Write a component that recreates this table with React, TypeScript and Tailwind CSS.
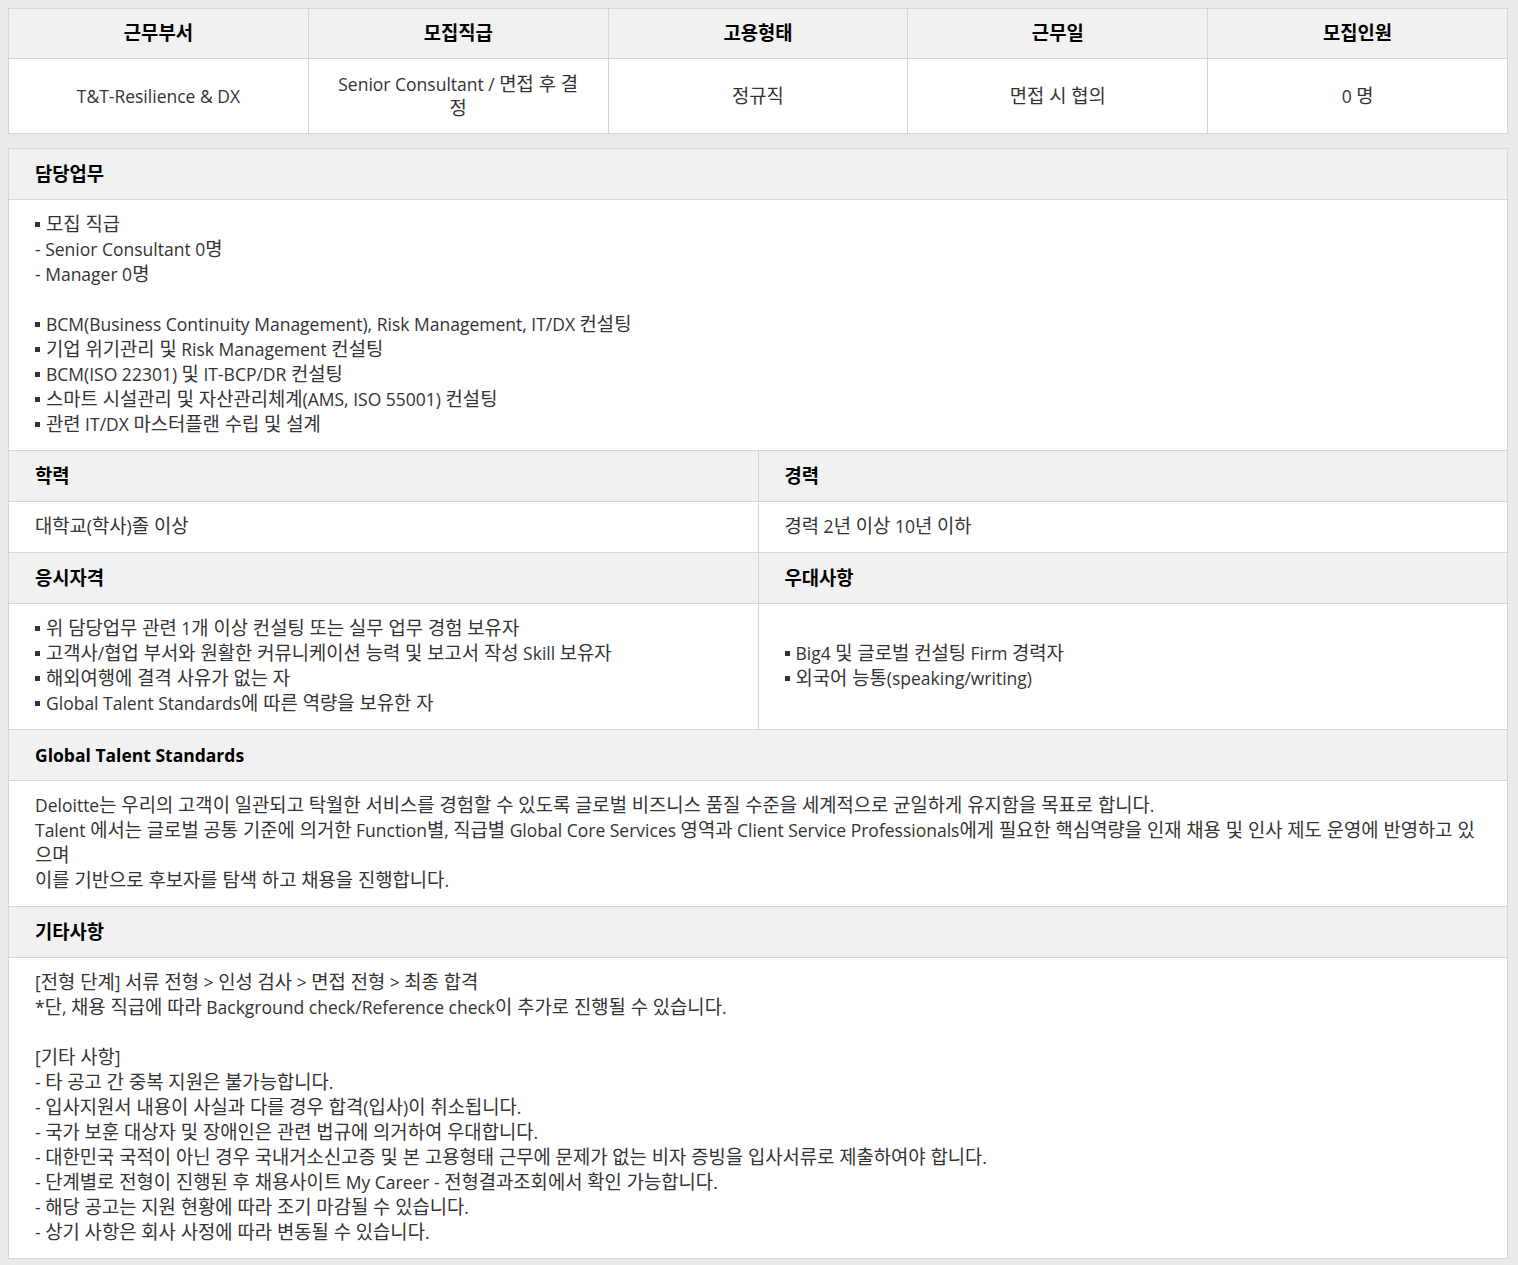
import type { ReactNode } from "react";

const font = { fontFamily: '"Open Sans", "Noto Sans CJK KR", sans-serif' };

// hangul runs are set a bit larger, the way the Korean face in the reference sits next to Open Sans
const HANGUL = /([\u3131-\u318E\uAC00-\uD7A3](?:[\u3131-\u318E\uAC00-\uD7A3 ]*[\u3131-\u318E\uAC00-\uD7A3])?)/;

function K({ t }: { t: string }) {
  const parts = t.split(HANGUL);
  return (
    <>
      {parts.map((p, i) =>
        i % 2 ? (
          <span key={i} className="text-[18.8px] leading-none">
            {p}
          </span>
        ) : (
          p
        )
      )}
    </>
  );
}

const topHeads = ["근무부서", "모집직급", "고용형태", "근무일", "모집인원"];
const topCells = ["T&T-Resilience & DX", "Senior Consultant / 면접 후 결정", "정규직", "면접 시 협의", "0 명"];

const th = "border border-[#d5d5d5] bg-[#f1f1f1] px-[26px] py-[13px] text-left text-[17.5px] font-bold leading-[24px] text-black";
const td = "border border-[#d5d5d5] bg-white px-[26px] pt-[12px] pb-[13px] align-middle text-[17.5px] leading-[25px] text-[#333]";

function Line({ t }: { t: string }) {
  let body: ReactNode = <K t={t} />;
  if (t.startsWith("▪ ")) {
    body = (
      <>
        <span className="mr-[6px] inline-block h-[5px] w-[5px] -translate-y-[4px] bg-[#333]" />
        <K t={t.slice(2)} />
      </>
    );
  }
  return <div className="min-h-[25px]">{body}</div>;
}

function Lines({ items }: { items: string[] }) {
  return (
    <>
      {items.map((t, i) => (
        <Line key={i} t={t} />
      ))}
    </>
  );
}

export default function App() {
  return (
    <div className="min-h-[1265px] bg-[#e9eaea] pl-2 pt-2 pb-[7px]" style={font}>
      <table className="w-[1500px] table-fixed border-collapse">
        <thead>
          <tr>
            {topHeads.map((h) => (
              <th key={h} className="border border-[#d5d5d5] bg-[#f1f1f1] px-5 py-[12px] text-center text-[17.5px] font-bold leading-[25px] text-black">
                <K t={h} />
              </th>
            ))}
          </tr>
        </thead>
        <tbody>
          <tr>
            {topCells.map((c) => (
              <td key={c} className="border border-[#d5d5d5] bg-white px-[26px] py-[13px] text-center text-[17.5px] leading-[24px] text-[#333]">
                <K t={c} />
              </td>
            ))}
          </tr>
        </tbody>
      </table>

      <table className="mt-[14px] w-[1500px] table-fixed border-collapse">
        <tbody>
          <tr>
            <th colSpan={2} className={th}>
              <K t="담당업무" />
            </th>
          </tr>
          <tr>
            <td colSpan={2} className={td}>
              <Lines
                items={[
                  "▪ 모집 직급",
                  "- Senior Consultant 0명",
                  "- Manager 0명",
                  "",
                  "▪ BCM(Business Continuity Management), Risk Management, IT/DX 컨설팅",
                  "▪ 기업 위기관리 및 Risk Management 컨설팅",
                  "▪ BCM(ISO 22301) 및 IT-BCP/DR 컨설팅",
                  "▪ 스마트 시설관리 및 자산관리체계(AMS, ISO 55001) 컨설팅",
                  "▪ 관련 IT/DX 마스터플랜 수립 및 설계",
                ]}
              />
            </td>
          </tr>
          <tr>
            <th className={th}>
              <K t="학력" />
            </th>
            <th className={th}>
              <K t="경력" />
            </th>
          </tr>
          <tr>
            <td className={td}>
              <K t="대학교(학사)졸 이상" />
            </td>
            <td className={td}>
              <K t="경력 2년 이상 10년 이하" />
            </td>
          </tr>
          <tr>
            <th className={th}>
              <K t="응시자격" />
            </th>
            <th className={th}>
              <K t="우대사항" />
            </th>
          </tr>
          <tr>
            <td className={td}>
              <Lines
                items={[
                  "▪ 위 담당업무 관련 1개 이상 컨설팅 또는 실무 업무 경험 보유자",
                  "▪ 고객사/협업 부서와 원활한 커뮤니케이션 능력 및 보고서 작성 Skill 보유자",
                  "▪ 해외여행에 결격 사유가 없는 자",
                  "▪ Global Talent Standards에 따른 역량을 보유한 자",
                ]}
              />
            </td>
            <td className={td}>
              <Lines items={["▪ Big4 및 글로벌 컨설팅 Firm 경력자", "▪ 외국어 능통(speaking/writing)"]} />
            </td>
          </tr>
          <tr>
            <th colSpan={2} className={th}>
              Global Talent Standards
            </th>
          </tr>
          <tr>
            <td colSpan={2} className={td}>
              <Lines
                items={[
                  "Deloitte는 우리의 고객이 일관되고 탁월한 서비스를 경험할 수 있도록 글로벌 비즈니스 품질 수준을 세계적으로 균일하게 유지함을 목표로 합니다.",
                  "Talent 에서는 글로벌 공통 기준에 의거한 Function별, 직급별 Global Core Services 영역과 Client Service Professionals에게 필요한 핵심역량을 인재 채용 및 인사 제도 운영에 반영하고 있으며",
                  "이를 기반으로 후보자를 탐색 하고 채용을 진행합니다.",
                ]}
              />
            </td>
          </tr>
          <tr>
            <th colSpan={2} className={th}>
              <K t="기타사항" />
            </th>
          </tr>
          <tr>
            <td colSpan={2} className={td}>
              <Lines
                items={[
                  "[전형 단계] 서류 전형 > 인성 검사 > 면접 전형 > 최종 합격",
                  "*단, 채용 직급에 따라 Background check/Reference check이 추가로 진행될 수 있습니다.",
                  "",
                  "[기타 사항]",
                  "- 타 공고 간 중복 지원은 불가능합니다.",
                  "- 입사지원서 내용이 사실과 다를 경우 합격(입사)이 취소됩니다.",
                  "- 국가 보훈 대상자 및 장애인은 관련 법규에 의거하여 우대합니다.",
                  "- 대한민국 국적이 아닌 경우 국내거소신고증 및 본 고용형태 근무에 문제가 없는 비자 증빙을 입사서류로 제출하여야 합니다.",
                  "- 단계별로 전형이 진행된 후 채용사이트 My Career - 전형결과조회에서 확인 가능합니다.",
                  "- 해당 공고는 지원 현황에 따라 조기 마감될 수 있습니다.",
                  "- 상기 사항은 회사 사정에 따라 변동될 수 있습니다.",
                ]}
              />
            </td>
          </tr>
        </tbody>
      </table>
    </div>
  );
}
